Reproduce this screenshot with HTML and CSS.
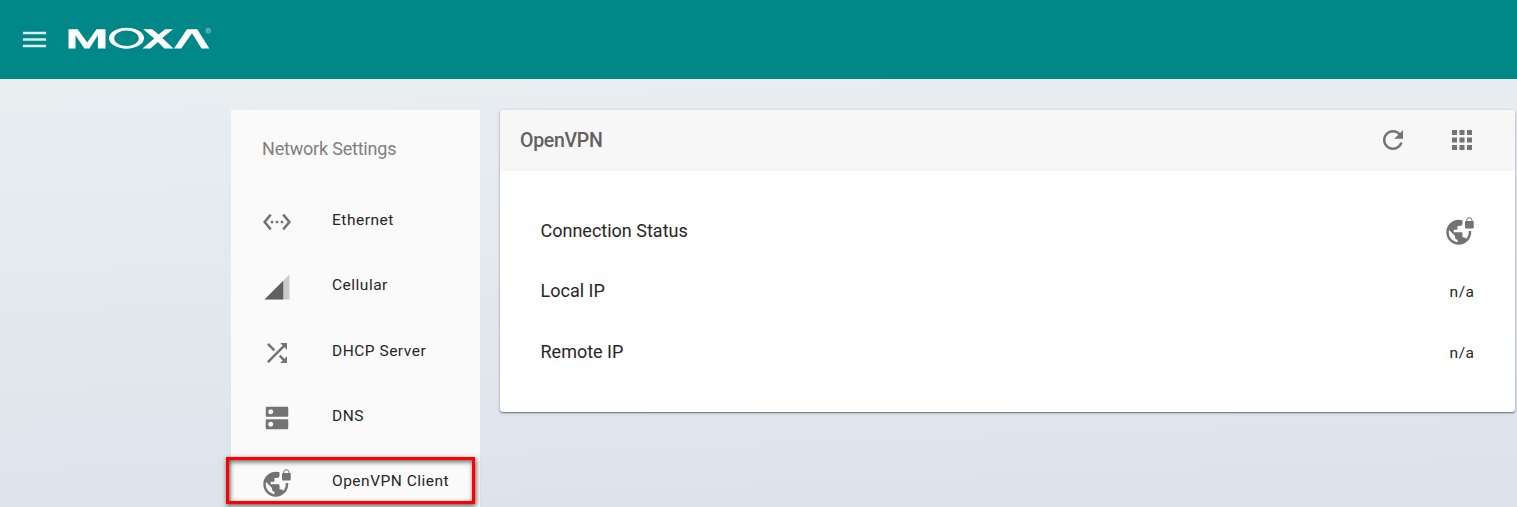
FILE: index.html
```html
<!DOCTYPE html>
<html lang="en">
<head>
<meta charset="utf-8">
<title>OpenVPN Client</title>
<link rel="stylesheet" href="styles.css">
</head>
<body>
<svg width="0" height="0" class="sprite">
  <symbol id="vpn-lock" viewBox="0 0 24 24"><path d="M22 4v-.5C22 2.12 20.88 1 19.5 1S17 2.12 17 3.5V4c-.55 0-1 .45-1 1v4c0 .55.45 1 1 1h5c.55 0 1-.45 1-1V5c0-.55-.45-1-1-1zm-.8 0h-3.4v-.5c0-.94.76-1.7 1.7-1.7s1.7.76 1.7 1.7V4zm-2.28 8c.04.33.08.66.08 1 0 2.08-.8 3.97-2.1 5.39-.26-.81-1-1.39-1.9-1.39h-1v-3c0-.55-.45-1-1-1H7v-2h2c.55 0 1-.45 1-1V8h2c1.1 0 2-.9 2-2V3.46c-.95-.3-1.95-.46-3-.46C5.48 3 1 7.48 1 13s4.48 10 10 10 10-4.48 10-10c0-.34-.02-.67-.05-1h-2.03zM10 20.93c-3.95-.49-7-3.85-7-7.93 0-.62.08-1.21.21-1.79L8 16v1c0 1.1.9 2 2 2v1.93z"/></symbol>
</svg>
<header class="topbar">
  <svg class="menu" viewBox="0 0 24 24"><path d="M3 18h18v-2H3v2zm0-5h18v-2H3v2zm0-7v2h18V6H3z"/></svg>
  <svg class="logo" viewBox="0 0 144 24" role="img" aria-label="MOXA">
    <g fill="none" stroke="#fff">
      <circle cx="140.2" cy="3.7" r="2.4" stroke-width=".6" opacity=".7"/>
      <path d="M139.5 5V2.5h1q.8 0 .8.7t-.8.7h-1m1 0 .9 1.2" stroke-width=".5" opacity=".7"/>
    </g>
    <path fill="#fff" fill-rule="evenodd" d="M41 11.2a17.500 10.500 0 1 0 35 0a17.500 10.500 0 1 0-35 0zM46.200 11.200a12.300 7.800 0 1 1 24.600 0a12.300 7.800 0 1 1-24.600 0z"/>
    <path fill="#fff" d="M.5 21.400V2.200h9.200l9.500 13.400L28.500 2.200h9v19.200h-7.600V8.200L21.400 21.400h-5L7.500 8.200v13.200zM75.300 2.200h9l6.300 5.300L97 2.200h8L94.300 11 105.500 21.400h-9L90 15 82.500 21.400h-8L86.200 11.400zM106 21.400 119 2.200h10.300L141.300 21.400h-7.800L124 6.200 113.200 21.400z"/>
  </svg>
</header>
<div class="layout">
  <nav class="sidebar">
    <h2 class="sidebar-title">Network Settings</h2>
    <ul class="nav">
      <li class="item"><svg class="icon" viewBox="0 0 24 24"><path d="M7.77 6.76L6.23 5.48.82 12l5.41 6.52 1.54-1.28L3.42 12l4.35-5.24zM7 13h2v-2H7v2zm10-2h-2v2h2v-2zm-6 2h2v-2h-2v2zm6.77-7.52l-1.54 1.28L20.58 12l-4.35 5.24 1.54 1.28L23.18 12l-5.41-6.52z"/></svg><span>Ethernet</span></li>
      <li class="item"><svg class="icon cell" viewBox="0 0 24 24"><path opacity=".3" d="M2 22h20V2z"/><path d="M17 7L2 22h15z"/></svg><span>Cellular</span></li>
      <li class="item"><svg class="icon" viewBox="0 0 24 24"><path d="M10.59 9.17L5.41 4 4 5.41l5.17 5.17 1.42-1.41zM14.5 4l2.04 2.04L4 18.59 5.41 20 17.96 7.46 20 9.5V4h-5.5zm.33 9.41l-1.41 1.41 3.13 3.13L14.5 20H20v-5.5l-2.04 2.04-3.13-3.13z"/></svg><span>DHCP Server</span></li>
      <li class="item"><svg class="icon" viewBox="0 0 24 24"><path d="M20 13H4c-.55 0-1 .45-1 1v6c0 .55.45 1 1 1h16c.55 0 1-.45 1-1v-6c0-.55-.45-1-1-1zM7 19c-1.1 0-2-.9-2-2s.9-2 2-2 2 .9 2 2-.9 2-2 2zM20 3H4c-.55 0-1 .45-1 1v6c0 .55.45 1 1 1h16c.55 0 1-.45 1-1V4c0-.55-.45-1-1-1zM7 9c-1.1 0-2-.9-2-2s.9-2 2-2 2 .9 2 2-.9 2-2 2z"/></svg><span>DNS</span></li>
      <li class="item marked"><svg class="icon"><use href="#vpn-lock"/></svg><span>OpenVPN Client</span></li>
    </ul>
  </nav>
  <main class="card">
    <div class="card-head">
      <h1 class="card-title">OpenVPN</h1>
      <svg class="icon" viewBox="0 0 24 24"><path d="M17.65 6.35C16.2 4.9 14.21 4 12 4c-4.42 0-7.99 3.58-7.99 8s3.57 8 7.99 8c3.73 0 6.84-2.55 7.73-6h-2.08c-.82 2.33-3.04 4-5.65 4-3.31 0-6-2.69-6-6s2.69-6 6-6c1.66 0 3.14.69 4.22 1.78L13 11h7V4l-2.35 2.35z"/></svg>
      <svg class="icon" viewBox="0 0 24 24"><path d="M4 8h4V4H4v4zm6 12h4v-4h-4v4zm-6 0h4v-4H4v4zm0-6h4v-4H4v4zm6 0h4v-4h-4v4zm6-10v4h4V4h-4zm-6 4h4V4h-4v4zm6 6h4v-4h-4v4zm0 6h4v-4h-4v4z"/></svg>
    </div>
    <div class="card-body">
      <div class="row"><span>Connection Status</span><svg class="icon"><use href="#vpn-lock"/></svg></div>
      <div class="row"><span>Local IP</span><span class="value">n/a</span></div>
      <div class="row"><span>Remote IP</span><span class="value">n/a</span></div>
    </div>
  </main>
</div>
</body>
</html>
```
FILE: styles.css
```css
*, *::after { box-sizing: border-box; }
body {
  margin: 0;
  height: 507px;
  overflow: hidden;
  font-family: Roboto, "Liberation Sans", sans-serif;
  color: #262626;
  background: linear-gradient(178deg, #e9eef1 15%, #dbe2ea 100%);
}
.sprite { display: none; }
.topbar {
  height: 79px;
  background: #008787;
  display: flex;
  align-items: center;
  padding: 0 0 0 19px;
}
.menu { width: 31px; height: 31px; fill: #d9eeee; }
.logo { width: 144px; height: 24px; margin: -1px 0 0 18px; }
.layout {
  display: flex;
  align-items: flex-start;
  gap: 20px;
  padding: 31px 2px 0 231px;
}
.sidebar { width: 249px; height: 420px; background: #fafafa; flex: none; }
.sidebar-title {
  margin: 0;
  padding: 28px 0 0 31px;
  height: 79.5px;
  font-size: 18px;
  line-height: 22px;
  font-weight: 400;
  letter-spacing: -.2px;
  color: #808080;
}
.nav { list-style: none; margin: 0; padding: 0; }
.item {
  position: relative;
  height: 65.3px;
  display: flex;
  align-items: center;
  padding-left: 31px;
  font-size: 15.5px;
  letter-spacing: .5px;
}
.item span { margin: -4px 0 0 40px; }
.icon { width: 30px; height: 30px; fill: #737373; flex: none; }
.cell { fill: #606060; }
.marked::after {
  content: "";
  position: absolute;
  left: -5px;
  top: 6.5px;
  width: 249px;
  height: 47px;
  border: 3px solid #f00;
  box-shadow: 1px 2px 5px rgba(0,0,0,.65), inset 1px 2px 5px rgba(0,0,0,.6);
}
.card {
  flex: 1;
  height: 302px;
  background: #fff;
  border-radius: 3px;
  box-shadow: 0 1px 3px rgba(0,0,0,.3), 0 1px 1px rgba(0,0,0,.3);
}
.card-head {
  height: 61px;
  padding: 0 38px 1px 20px;
  display: flex;
  align-items: center;
  gap: 39px;
  background: #f7f7f7;
  border-radius: 3px 3px 0 0;
}
.card-title {
  margin: 0 auto 0 0;
  padding-top: 1px;
  font-size: 19.5px;
  font-weight: 500;
  letter-spacing: -.3px;
  color: #616161;
}
.card-body { padding: 29px 40.5px 0 40.5px; }
.row {
  height: 60.5px;
  display: flex;
  align-items: center;
  justify-content: space-between;
  font-size: 18px;
}
.row .icon { margin-top: 2px; }
.value { font-size: 15.5px; letter-spacing: .5px; padding-top: 3px; }
```
